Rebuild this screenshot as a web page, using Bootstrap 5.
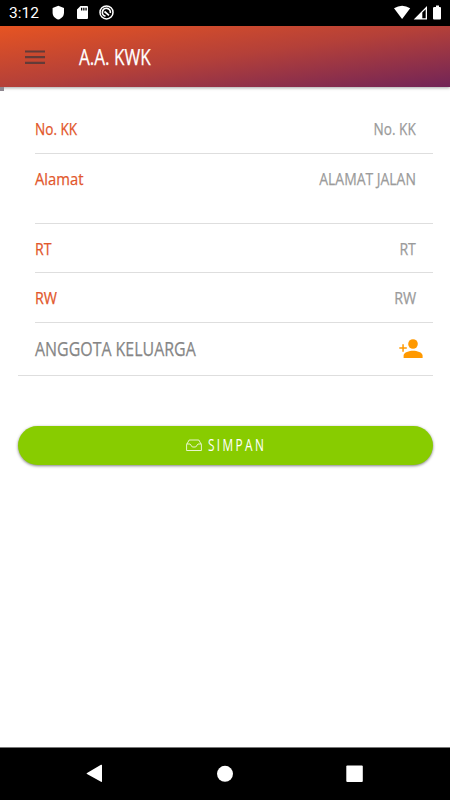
<!DOCTYPE html>
<html lang="id">
<head>
<meta charset="utf-8">
<meta name="viewport" content="width=device-width, initial-scale=1">
<title>A.A. KWK</title>
<link href="https://cdn.jsdelivr.net/npm/bootstrap@5.3.0/dist/css/bootstrap.min.css" rel="stylesheet">
<style>
body{font-family:"Open Sans","Noto Sans",sans-serif;height:800px;overflow:hidden;background:#fff}
.status{height:26px;padding:0 8px 0 9px;font:15.500px/27px Roboto,sans-serif}
.appbar{height:61px;padding:0 24px;background:linear-gradient(to bottom right,#e65422 0%,#b44039 50%,#712457 100%);box-shadow:0 1px 3px rgba(0,0,0,.35)}
.title{font-size:22px;line-height:30px;margin:-1px 0 0 33px}
.squeeze{display:inline-block;white-space:nowrap;transform:scaleX(var(--sx));transform-origin:left center;-webkit-text-stroke:.25px currentColor}
.squeeze-end{transform-origin:right center}
.progress-start{width:4px;height:4px;background:#8f8790}
.form-list{padding:13px 17px 0 18px}
.field{margin-left:17px;padding-right:17px;height:49.6px;border-bottom:1px solid #dedede;font-size:17px;line-height:24px;padding-top:13px}
.field-first{height:50px;padding-top:12.500px}
.field-tall{height:69.6px;padding-top:12.500px}
.key{color:#e2572b}
.val{color:#9b9b9b}
.members{height:52.8px;border-bottom:1px solid #dedede;padding:0 9px 0 17px;color:#868686;font-size:19.5px}
.save{height:39px;margin:50px 0 0 0;background:#8c0;color:#fff;box-shadow:0 1px 3px rgba(0,0,0,.5);border:0;font-size:16px;line-height:22px}
.save:hover{background:#7ebd00;color:#fff}
.save-text{letter-spacing:3.200px;margin-left:6px;width:57px;-webkit-text-stroke:0}
.navkeys{height:53px;border-top:1px solid #777}
</style>
<script src="https://cdn.jsdelivr.net/npm/bootstrap@5.3.0/dist/js/bootstrap.bundle.min.js"></script>
</head>
<body class="d-flex flex-column m-0">
<div class="status bg-black text-white d-flex align-items-center flex-shrink-0">
  <span style="width:43px">3:12</span>
  <svg width="64" height="16" viewBox="0 0 64 16" fill="#fff">
    <path d="M6.3.8 12 2.9v4.5c0 3.8-2.4 6-5.7 7.1C3 13.400.6 11.200.6 7.400V2.900z"/>
    <path fill-rule="evenodd" d="M28.500 1H35q1 0 1 1v11q0 1-1 1h-9q-1 0-1-1V4.500zM29 2.700v2.800h1.300V2.700zm2.200 0v2.800h1.300V2.700zm2.200 0v2.800h1.300V2.700z"/>
    <g fill="none" stroke="#fff"><circle cx="54.500" cy="7.400" r="6.500" stroke-width="1.500"/><path d="M53.500 11.200A4 4 0 1 1 58.300 8M52.500 6.500l4.500 3.800" stroke-width="1.700"/></g>
  </svg>
  <svg class="ms-auto" width="48" height="16" viewBox="0 0 48 16" fill="#fff">
    <path d="M0 3.300Q8.100-1.900 16.200 3.300L8.100 14z"/>
    <path fill-rule="evenodd" d="M27 14.500 40.300 14.500 40.300 1z M35.600 13.300V7.600L39 4.200v9.100z" transform="translate(-7.300 0)"/>
    <path d="M42 2h-1.500q-1.500 0-1.500 1v10.500q0 1 1 1h6q1 0 1-1V3q0-1-1-1h-1V.5h-3z"/>
  </svg>
</div>
<header class="appbar text-white d-flex align-items-center flex-shrink-0">
  <svg width="22" height="16" viewBox="0 0 22 16" fill="none" stroke="#633b38" stroke-width="2.200"><path d="M1 2.500h20M1 8.200h20M1 13.800h20"/></svg>
  <span class="title squeeze" style="--sx:.777">A.A. KWK</span>
</header>
<div class="progress-start flex-shrink-0"></div>
<main class="form-list flex-grow-1">
  <div class="field field-first d-flex justify-content-between"><span class="key squeeze" style="--sx:.8">No. KK</span><span class="val squeeze squeeze-end" style="--sx:.8">No. KK</span></div>
  <div class="field field-tall d-flex justify-content-between"><span class="key squeeze" style="--sx:.87">Alamat</span><span class="val squeeze squeeze-end" style="--sx:.82">ALAMAT JALAN</span></div>
  <div class="field d-flex justify-content-between"><span class="key squeeze" style="--sx:.83">RT</span><span class="val squeeze squeeze-end" style="--sx:.83">RT</span></div>
  <div class="field d-flex justify-content-between"><span class="key squeeze" style="--sx:.84">RW</span><span class="val squeeze squeeze-end" style="--sx:.84">RW</span></div>
  <div class="members d-flex align-items-center justify-content-between">
    <span class="squeeze" style="--sx:.817">ANGGOTA KELUARGA</span>
    <svg width="26" height="20" viewBox="0 0 26 20" fill="#f90"><circle cx="15" cy="5" r="4.800"/><path d="M5.600 19v-2.500c0-3.200 5.800-4.800 9.500-4.800s9.500 1.600 9.500 4.800V19zM4.300 5.200h1.500v3h3v1.500h-3v3H4.300v-3h-3V8.200h3z"/></svg>
  </div>
  <button type="button" class="btn save rounded-pill w-100 d-flex align-items-center justify-content-center p-0">
    <svg width="16" height="13" viewBox="0 0 16 13" fill="none" stroke="#fff" stroke-width=".8"><path d="M.6 5.500 3.200 1h9.600L15.400 5.500v6H.6zM.6 5H4l2.300 3h3.400L12 5h3.400"/></svg>
    <span class="save-text squeeze text-start" style="--sx:.74">SIMPAN</span>
  </button>
</main>
<footer class="navkeys bg-black d-flex align-items-center justify-content-center flex-shrink-0">
  <svg width="278" height="20" viewBox="0 0 278 20" fill="#fff"><path d="M1 9.100 15 .8q1-.5 1 .5v16q0 1-1 .5L1 10.100q-1-.5 0-1z"/><circle cx="139" cy="9.800" r="8"/><rect x="260.300" y="1.500" width="16.500" height="16.500" rx="1"/></svg>
</footer>
</body>
</html>
